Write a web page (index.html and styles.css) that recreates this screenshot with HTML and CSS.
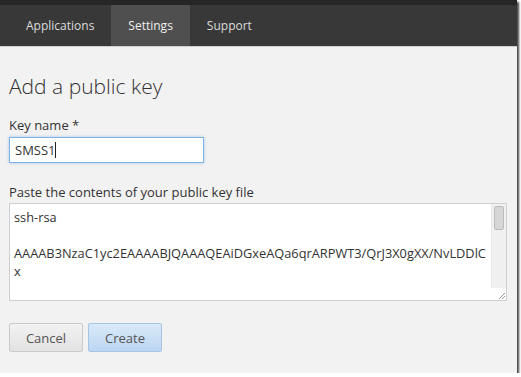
FILE: index.html
```html
<!DOCTYPE html>
<html lang="en">
<head>
    <meta charset="UTF-8">
    <meta name="viewport" content="width=device-width, initial-scale=1.0">
    <title>Add a public key</title>
    <link rel="stylesheet" href="styles.css">
</head>
<body>
    <div class="window">
        <header class="topbar">
            <nav class="tabs">
                <a class="tab" href="#">Applications</a>
                <a class="tab active" href="#">Settings</a>
                <a class="tab" href="#">Support</a>
            </nav>
        </header>

        <main class="content">
            <h1>Add a public key</h1>

            <form class="key-form">
                <label for="key-name">Key name *</label>
                <div class="name-input">
                    <input type="text" id="key-name" value="SMSS1">
                    <span class="caret"></span>
                </div>

                <label for="key-body">Paste the contents of your public key file</label>
                <div class="key-box">
                    <textarea id="key-body" class="key-input">ssh-rsa

AAAAB3NzaC1yc2EAAAABJQAAAQEAiDGxeAQa6qrARPWT3/QrJ3X0gXX/NvLDDlC
x</textarea>
                    <div class="scrollbar">
                        <div class="scroll-track">
                            <div class="scroll-thumb"></div>
                        </div>
                        <div class="grip">
                            <svg width="9" height="9" viewBox="0 0 9 9">
                                <path d="M8 2 L2 8 M8 5 L5 8" stroke="#999" stroke-width="1"/>
                            </svg>
                        </div>
                    </div>
                </div>

                <div class="actions">
                    <button type="button" class="btn">Cancel</button>
                    <button type="button" class="btn btn-primary">Create</button>
                </div>
            </form>
        </main>
    </div>
</body>
</html>
```

FILE: styles.css
```css
body {
    margin: 0;
    padding: 0;
    background-color: #ffffff;
    font-family: "Open Sans", Arial, sans-serif;
    color: #333;
}

.window {
    width: 517px;
    height: 373px;
    background-color: #f2f2f2;
    box-shadow: 2px 2px 2px #444;
    overflow: hidden;
}

.topbar {
    background-color: #262626;
    padding-top: 5px;
    border-bottom: 1px solid #cfcfcf;
}

.tabs {
    display: flex;
    height: 41px;
    padding-left: 9px;
    background-color: #383838;
}

.tab {
    display: flex;
    align-items: center;
    padding: 0 17px;
    color: #dcdcdc;
    font-size: 12px;
    text-decoration: none;
}

.tab.active {
    background-color: #4f4f4f;
    color: #f0f0f0;
}

.content {
    padding: 0 9px;
}

.content h1 {
    margin: 24px 0 0;
    font-size: 21px;
    font-weight: 300;
    color: #333;
    line-height: 30px;
}

.key-form {
    display: flex;
    flex-direction: column;
    align-items: flex-start;
}

.key-form label {
    font-size: 13px;
    color: #333;
    line-height: 18px;
}

.key-form label[for="key-name"] {
    margin-top: 15px;
}

.name-input {
    box-sizing: border-box;
    display: flex;
    align-items: center;
    width: 195px;
    height: 26px;
    margin-top: 3px;
    padding: 0 5px;
    border: 1px solid #7fb3e6;
    box-shadow: 0 0 3px rgba(100, 160, 230, 0.5);
    background-color: #fff;
}

.name-input input {
    width: 39px;
    padding: 0;
    border: none;
    outline: none;
    font-family: inherit;
    font-size: 13px;
    color: #333;
    background: transparent;
}

.caret {
    width: 1px;
    height: 16px;
    margin-left: 1px;
    background-color: #222;
}

.key-form label[for="key-body"] {
    margin-top: 20px;
}

.key-box {
    display: flex;
    box-sizing: border-box;
    width: 498px;
    height: 98px;
    margin-top: 2px;
    border: 1px solid #cfcfcf;
    background-color: #fff;
}

.key-input {
    flex: 1;
    padding: 4px 1px 4px 4px;
    border: none;
    outline: none;
    background-color: #fff;
    font-family: inherit;
    font-size: 12.8px;
    line-height: 18px;
    color: #333;
    resize: none;
    overflow: hidden;
}

.scrollbar {
    display: flex;
    flex-direction: column;
    width: 15px;
}

.scroll-track {
    flex: 1;
    padding: 2px 2px;
    background-color: #f0f0f0;
    border-left: 1px solid #e8e8e8;
}

.scroll-thumb {
    height: 22px;
    border: 1px solid #bcbcbc;
    border-radius: 2px;
    background-color: #d6d6d6;
}

.grip {
    display: flex;
    align-items: flex-end;
    justify-content: flex-end;
    height: 12px;
    background-color: #fff;
}

.actions {
    display: flex;
    gap: 5px;
    margin-top: 22px;
}

.btn {
    width: 74px;
    height: 29px;
    border: 1px solid #cacaca;
    border-radius: 2px;
    background: linear-gradient(#f2f2f2, #e2e2e2);
    font-family: inherit;
    font-size: 13px;
    color: #555;
    cursor: pointer;
}

.btn-primary {
    border-color: #a6c4e4;
    background: linear-gradient(#d9e9f9, #bcd6f1);
}
```
